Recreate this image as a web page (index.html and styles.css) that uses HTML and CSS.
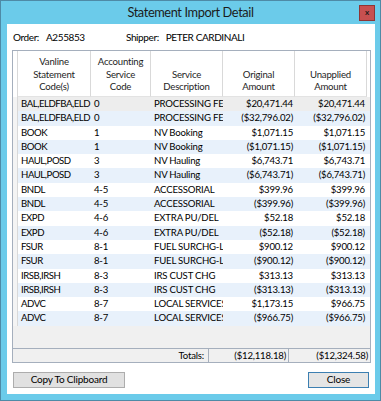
FILE: index.html
```html
<!DOCTYPE html>
<html lang="en">
<head>
  <meta charset="UTF-8" />
  <title>Statement Import Detail</title>
  <link rel="stylesheet" href="styles.css">
</head>
<body>

  <div class="window">
    <!-- Title bar -->
    <div class="titlebar">
      <span></span>
      <div class="title">Statement Import Detail</div>
      <div class="close-x">x</div>
    </div>

    <div class="client">
      <div class="info">
        <span class="lbl">Order:</span><span class="val order-val">A255853</span>
        <span class="lbl">Shipper:</span><span class="val">PETER CARDINALI</span>
      </div>

      <div class="grid">
        <div class="grid-head">
          <div class="rh"></div>
          <div class="hc">Vanline<br>Statement<br>Code(s)</div>
          <div class="hc">Accounting<br>Service<br>Code</div>
          <div class="hc">Service<br>Description</div>
          <div class="hc">Original<br>Amount</div>
          <div class="hc">Unapplied<br>Amount</div>
        </div>

        <div class="grid-body">
          <div class="row current"><div class="rh"></div><div class="c code">BAL,ELDFBA,ELD</div><div class="c">0</div><div class="c">PROCESSING FE</div><div class="c num">$20,471.44</div><div class="c num">$20,471.44</div></div>
          <div class="row alt"><div class="rh"></div><div class="c code">BAL,ELDFBA,ELD</div><div class="c">0</div><div class="c">PROCESSING FE</div><div class="c num">($32,796.02)</div><div class="c num">($32,796.02)</div></div>
          <div class="row"><div class="rh"></div><div class="c code">BOOK</div><div class="c">1</div><div class="c">NV Booking</div><div class="c num">$1,071.15</div><div class="c num">$1,071.15</div></div>
          <div class="row alt"><div class="rh"></div><div class="c code">BOOK</div><div class="c">1</div><div class="c">NV Booking</div><div class="c num">($1,071.15)</div><div class="c num">($1,071.15)</div></div>
          <div class="row"><div class="rh"></div><div class="c code">HAUL,POSD</div><div class="c">3</div><div class="c">NV Hauling</div><div class="c num">$6,743.71</div><div class="c num">$6,743.71</div></div>
          <div class="row alt"><div class="rh"></div><div class="c code">HAUL,POSD</div><div class="c">3</div><div class="c">NV Hauling</div><div class="c num">($6,743.71)</div><div class="c num">($6,743.71)</div></div>
          <div class="row"><div class="rh"></div><div class="c code">BNDL</div><div class="c">4-5</div><div class="c">ACCESSORIAL</div><div class="c num">$399.96</div><div class="c num">$399.96</div></div>
          <div class="row alt"><div class="rh"></div><div class="c code">BNDL</div><div class="c">4-5</div><div class="c">ACCESSORIAL</div><div class="c num">($399.96)</div><div class="c num">($399.96)</div></div>
          <div class="row"><div class="rh"></div><div class="c code">EXPD</div><div class="c">4-6</div><div class="c">EXTRA PU/DEL</div><div class="c num">$52.18</div><div class="c num">$52.18</div></div>
          <div class="row alt"><div class="rh"></div><div class="c code">EXPD</div><div class="c">4-6</div><div class="c">EXTRA PU/DEL</div><div class="c num">($52.18)</div><div class="c num">($52.18)</div></div>
          <div class="row"><div class="rh"></div><div class="c code">FSUR</div><div class="c">8-1</div><div class="c">FUEL SURCHG-L</div><div class="c num">$900.12</div><div class="c num">$900.12</div></div>
          <div class="row alt"><div class="rh"></div><div class="c code">FSUR</div><div class="c">8-1</div><div class="c">FUEL SURCHG-L</div><div class="c num">($900.12)</div><div class="c num">($900.12)</div></div>
          <div class="row"><div class="rh"></div><div class="c code">IRSB,IRSH</div><div class="c">8-3</div><div class="c">IRS CUST CHG</div><div class="c num">$313.13</div><div class="c num">$313.13</div></div>
          <div class="row alt"><div class="rh"></div><div class="c code">IRSB,IRSH</div><div class="c">8-3</div><div class="c">IRS CUST CHG</div><div class="c num">($313.13)</div><div class="c num">($313.13)</div></div>
          <div class="row"><div class="rh"></div><div class="c code">ADVC</div><div class="c">8-7</div><div class="c">LOCAL SERVICES</div><div class="c num">$1,173.15</div><div class="c num">$966.75</div></div>
          <div class="row alt"><div class="rh"></div><div class="c code">ADVC</div><div class="c">8-7</div><div class="c">LOCAL SERVICES</div><div class="c num">($966.75)</div><div class="c num">($966.75)</div></div>
        </div>

        <div class="grid-empty"></div>

        <div class="totals">
          <div class="tot-label">Totals:</div>
          <div class="tot-cell">($12,118.18)</div>
          <div class="tot-cell">($12,324.58)</div>
        </div>
      </div>

      <div class="buttons">
        <button class="btn copy-btn">Copy To Clipboard</button>
        <button class="btn close-btn">Close</button>
      </div>
    </div>
  </div>

</body>
</html>
```

FILE: styles.css
```css
/*********************************
 * Page & window frame
 *********************************/
html, body {
  margin: 0;
  padding: 0;
  background-color: #ffffff;
  font-family: "Segoe UI", Lato, sans-serif;
  font-size: 9.6px;
  letter-spacing: -0.2px;
  color: #000000;
}

.window {
  width: 381px;
  height: 401px;
  box-sizing: border-box;
  border: 1px solid #4e8aa6;
  background-color: #6bcbea;
  display: flex;
  flex-direction: column;
}

/* Title bar */
.titlebar {
  height: 23px;
  display: grid;
  grid-template-columns: 1fr auto 1fr;
  align-items: center;
}
.title {
  font-size: 12.8px;
  letter-spacing: -0.4px;
  color: #1b1b1b;
  padding-bottom: 1px;
}
.close-x {
  justify-self: end;
  margin-right: 5px;
  width: 14px;
  height: 14px;
  background-color: #c75050;
  border: 1px solid #8f3535;
  color: #1a1a1a;
  font-size: 8px;
  font-weight: bold;
  line-height: 12px;
  text-align: center;
  letter-spacing: 0;
}

/*============================
  Client area
============================*/
.client {
  flex: 1;
  margin: 0 5px 6px 6px;
  background-color: #ffffff;
  display: flex;
  flex-direction: column;
  padding: 0 6px 0 5px;
}

.info {
  height: 26px;
  display: flex;
  align-items: center;
  padding-left: 1px;
  font-size: 10px;
  letter-spacing: -0.4px;
}
.lbl {
  margin-right: 7px;
}
.order-val {
  width: 80px;
}

/*============================
  Data grid
============================*/
.grid {
  width: 357px;
  border: 1px solid #a5afbd;
  display: flex;
  flex-direction: column;
  background-color: #f0f0f0;
}

.grid-head,
.row {
  display: grid;
  grid-template-columns: 5px 73px 60px 72px 72px 72px;
}

.grid-head {
  height: 46px;
  background-color: #ffffff;
}
.grid-head .rh {
  border-right: 1px solid #d9d9d9;
}
.hc {
  border-right: 1px solid #d9d9d9;
  border-bottom: 1px solid #e3e3e3;
  display: flex;
  align-items: flex-end;
  justify-content: center;
  text-align: center;
  line-height: 12.7px;
  color: #1e1e1e;
  padding-bottom: 2px;
}

.row {
  height: 14.3px;
  line-height: 14px;
  background-color: #ffffff;
}
.row.alt {
  background-color: #e8f1fb;
}
.row.current {
  background-color: #ededed;
}
.row .rh {
  background-color: #f4f4f4;
  border-right: 1px solid #d9d9d9;
}
.c {
  padding: 0 3px;
  white-space: nowrap;
  overflow: hidden;
}
.c.code {
  letter-spacing: -0.45px;
}
.c.num {
  text-align: right;
  padding-right: 2px;
}

.grid-empty {
  height: 22px;
  border-bottom: 1px solid #a5afbd;
}

/* Totals footer */
.totals {
  height: 13px;
  display: flex;
  line-height: 13px;
}
.tot-label {
  box-sizing: border-box;
  width: 196px;
  text-align: right;
  padding-right: 4px;
  border-right: 1px solid #a5afbd;
}
.tot-cell {
  box-sizing: border-box;
  width: 80px;
  padding-right: 2px;
  text-align: right;
  border-right: 1px solid #a5afbd;
}
.tot-cell:last-child {
  flex: 1;
  border-right: none;
}

/*============================
  Buttons
============================*/
.buttons {
  display: flex;
  justify-content: space-between;
  margin-top: 9px;
  padding-left: 1px;
}
.btn {
  font-family: "Segoe UI", Lato, sans-serif;
  font-size: 10px;
  letter-spacing: -0.2px;
  height: 16px;
  padding: 0;
  line-height: 13px;
  background-color: #e1e1e1;
  border: 1px solid #adadad;
  color: #000000;
}
.copy-btn {
  width: 112px;
}
.close-btn {
  width: 61px;
  border-color: #3c7fb1;
  background-color: #e5e5e5;
}
```
